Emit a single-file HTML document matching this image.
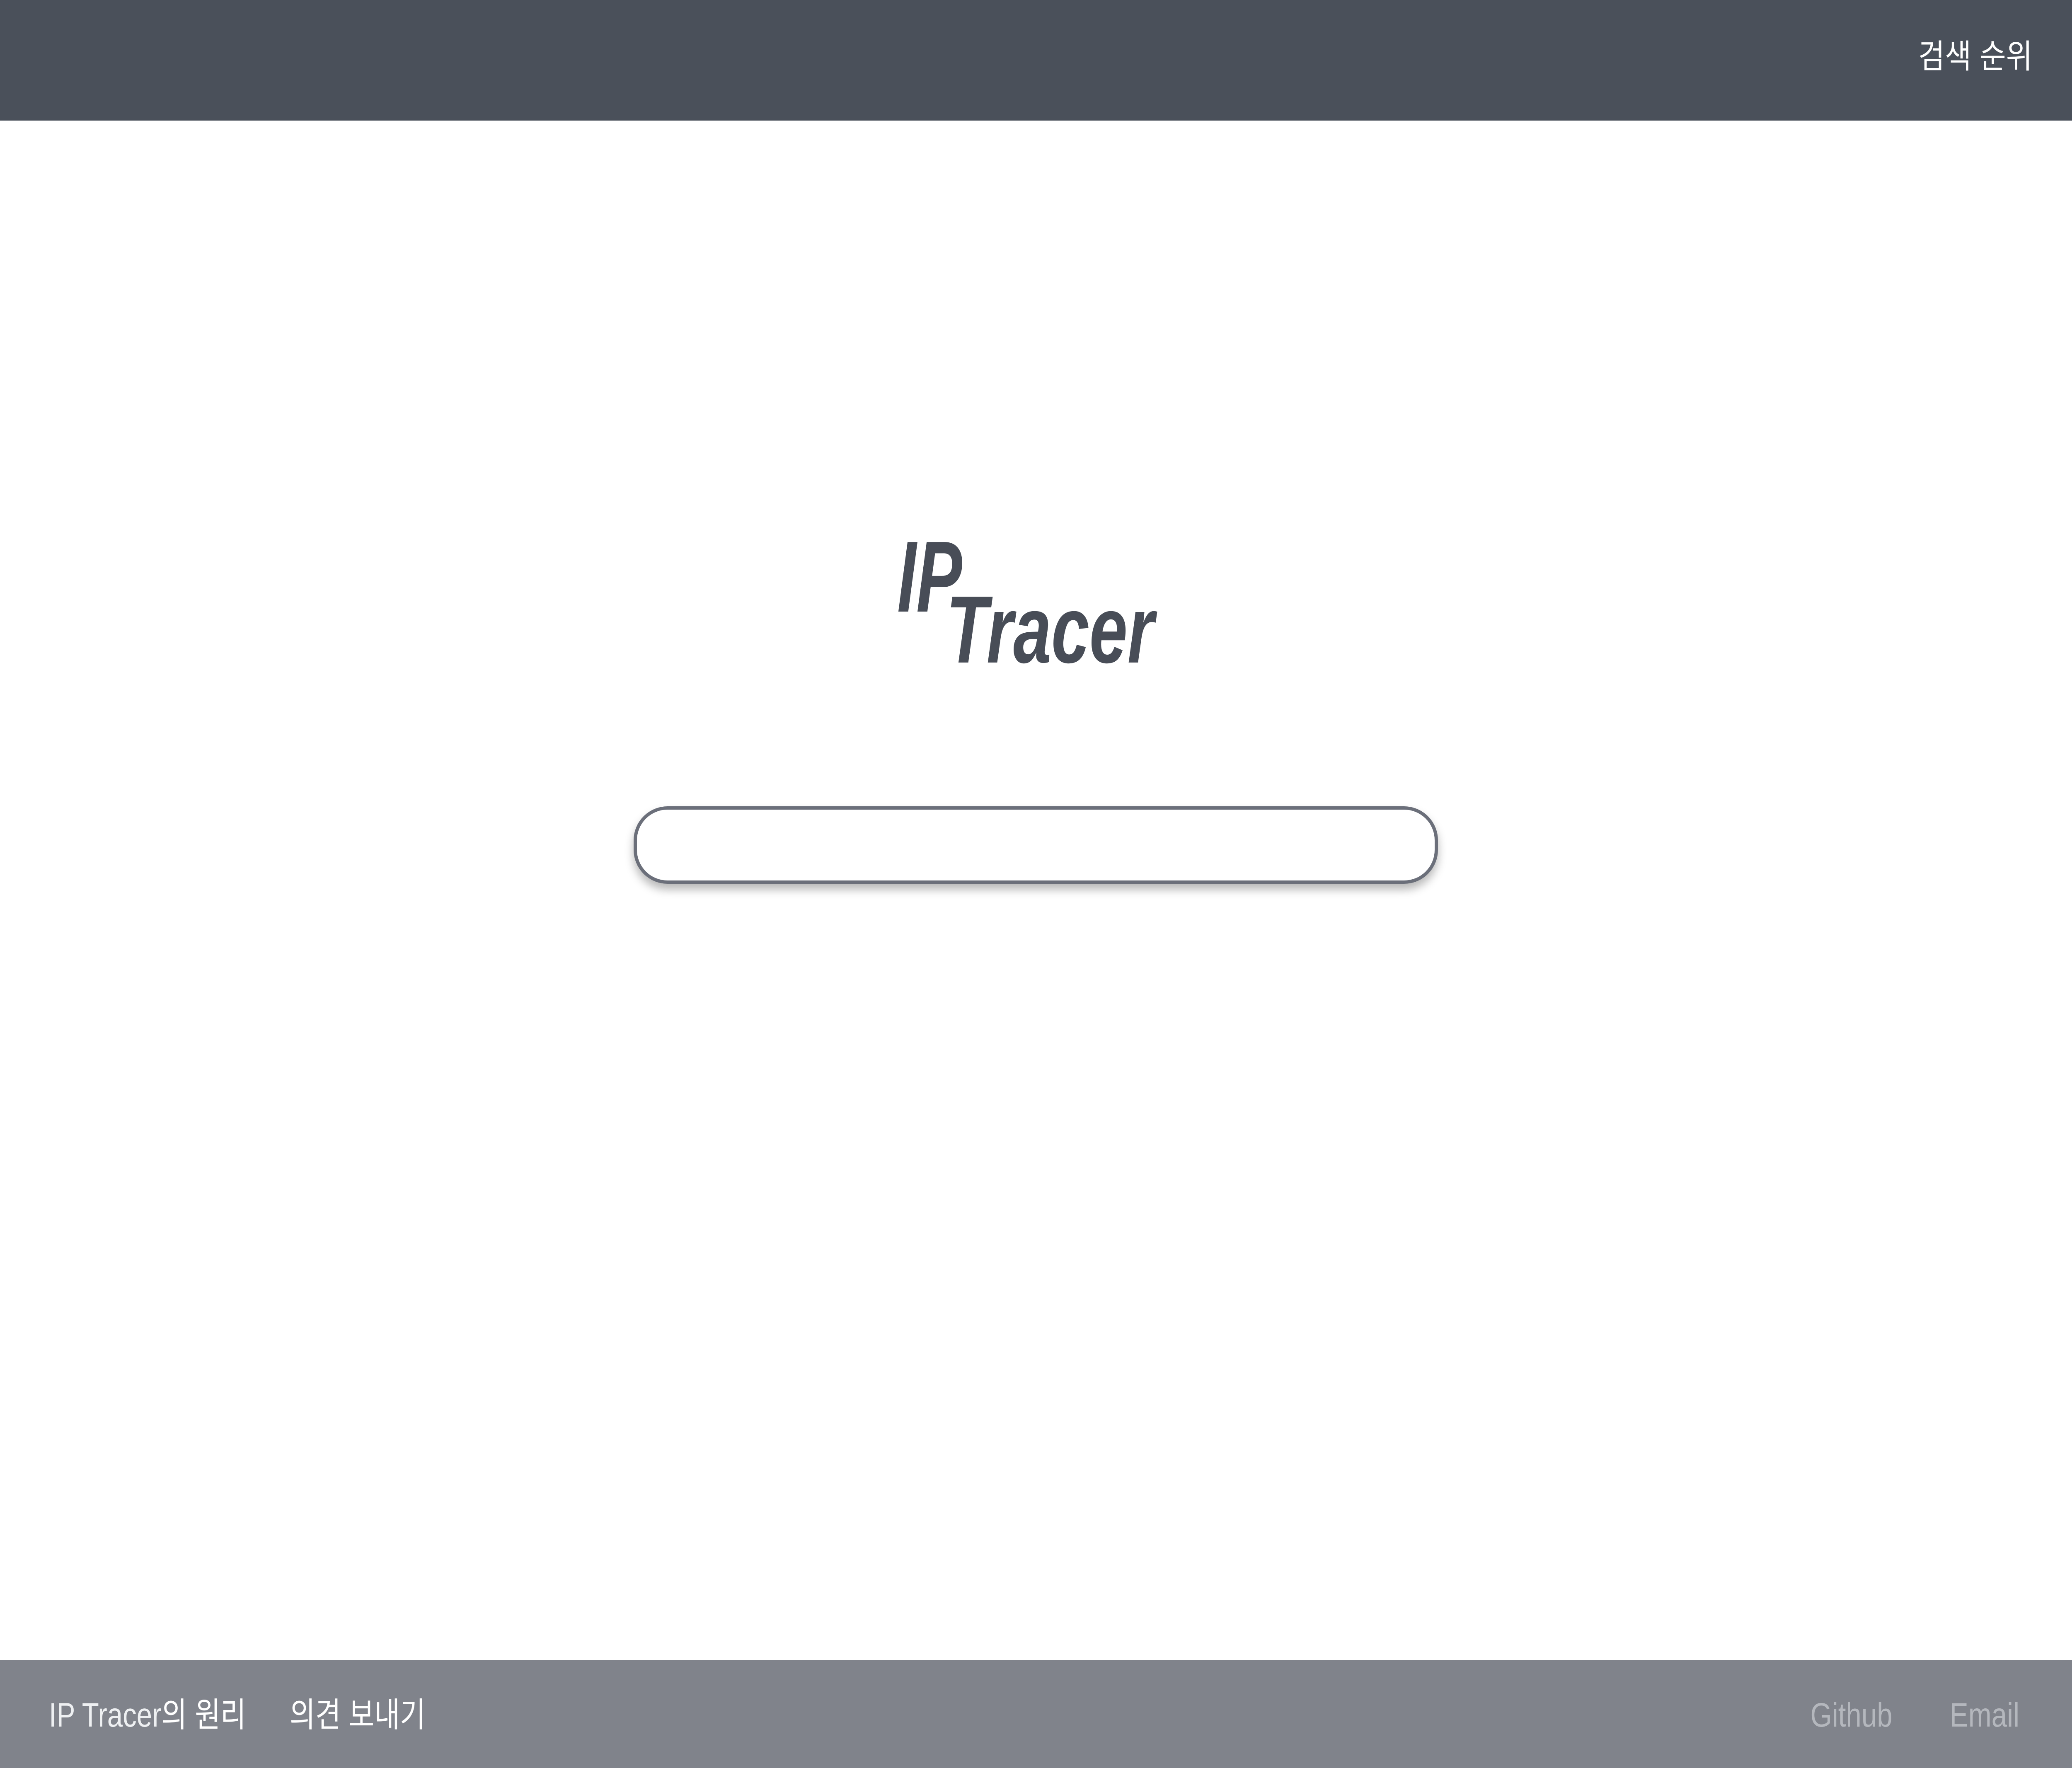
<!DOCTYPE html>
<html><head><meta charset="utf-8"><style>
html,body{margin:0;padding:0;width:100%;height:4267px;background:#fff;overflow:hidden;position:relative;font-family:"Liberation Sans","Noto Sans CJK KR",sans-serif}
.wrap{position:relative;width:100%;height:4267px;overflow:hidden}
.hdr{position:absolute;left:0;top:0;right:0;height:291px;background:#4a505a}
.hdr span{position:absolute;right:1.9%;top:82px;font-size:80px;line-height:110px;color:#fff;white-space:nowrap;transform-origin:100% 50%;transform:scaleX(0.87)}
.logo{position:absolute;font-weight:bold;font-style:italic;color:#484d57;line-height:1;white-space:nowrap;transform-origin:0 0}
.box{position:absolute;left:30.57%;top:1946px;width:38.83%;height:187px;box-sizing:border-box;border:8px solid #6b6f7a;border-radius:82px;background:#fff;box-shadow:0 14px 22px rgba(0,0,0,0.28)}
.ftr{position:absolute;left:0;right:0;top:4007px;height:260px;background:#80838b}
.ftr span.t{position:absolute;top:78px;font-size:82px;line-height:110px;white-space:nowrap;transform:scaleX(0.82)}
.l{transform-origin:0 50%}
.r{transform-origin:100% 50%}
</style></head><body><div class="wrap">
<div class="hdr"><span>검색 순위</span></div>
<div class="logo" style="left:43.3%;top:1270px;font-size:244px;transform:scaleX(0.68)">IP</div>
<div class="logo" style="left:45.67%;top:1404px;font-size:231px;transform:scaleX(0.715)">Tracer</div>
<div class="box"></div>
<div class="ftr">
<span class="t l" style="left:2.37%;color:#fff"><span style="color:#eef0f2">IP Tracer</span>의 원리</span>
<span class="t l" style="left:13.97%;color:#fff">의견 보내기</span>
<span class="t r" style="right:8.67%;color:#b4b7bd">Github</span>
<span class="t r" style="right:2.53%;color:#b4b7bd">Email</span>
</div>
</div></body></html>
